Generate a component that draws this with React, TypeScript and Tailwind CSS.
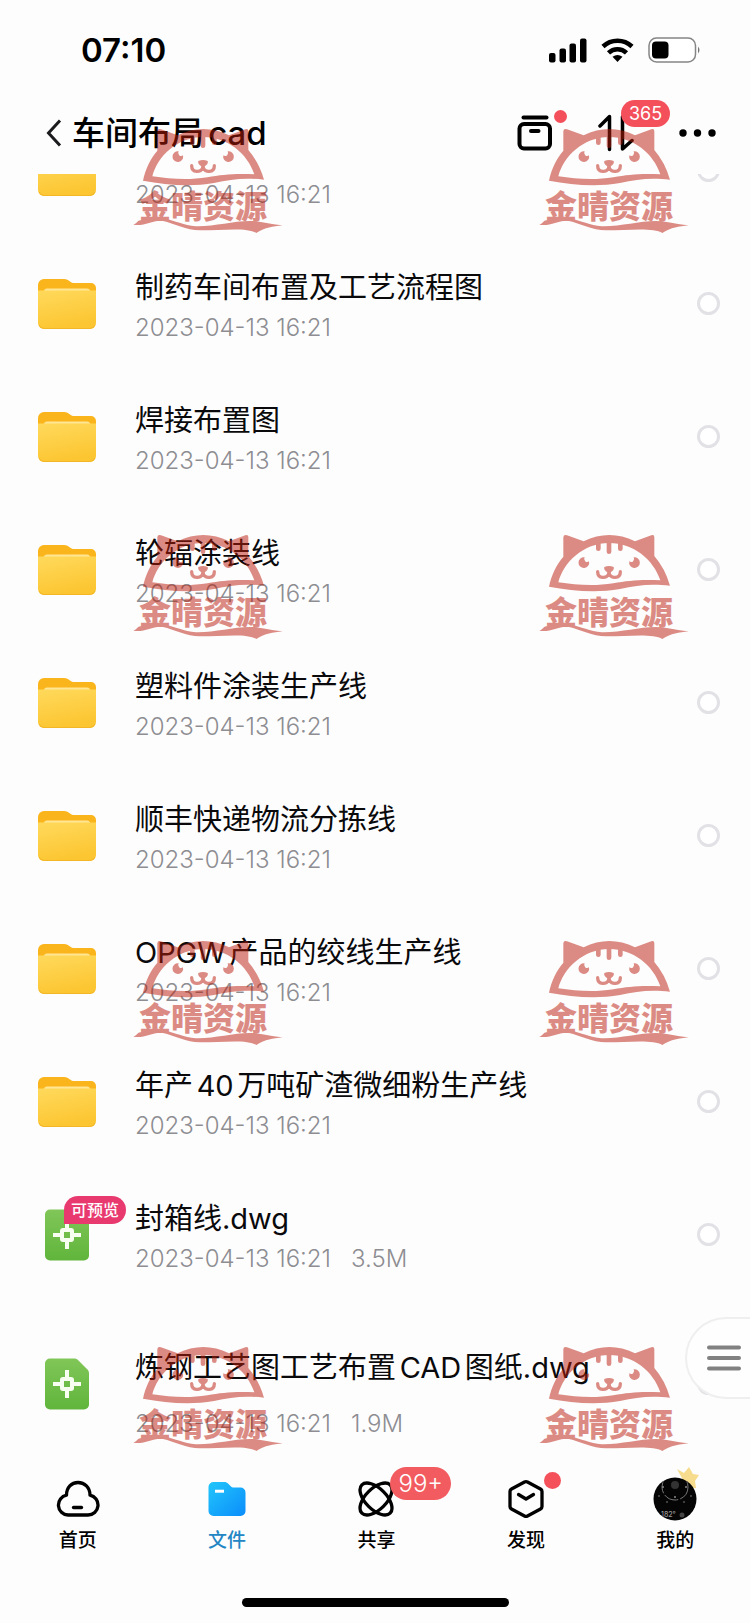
import type { ReactNode } from "react";

type Entry = {
  name: string;
  date: string;
  size?: string;
  kind: "folder" | "dwg";
  preview?: boolean;
};

const DATE = "2023-04-13 16:21";

const entries: Entry[] = [
  { name: "制药车间布置及工艺流程图", date: DATE, kind: "folder" },
  { name: "焊接布置图", date: DATE, kind: "folder" },
  { name: "轮辐涂装线", date: DATE, kind: "folder" },
  { name: "塑料件涂装生产线", date: DATE, kind: "folder" },
  { name: "顺丰快递物流分拣线", date: DATE, kind: "folder" },
  { name: "OPGW产品的绞线生产线", date: DATE, kind: "folder" },
  { name: "年产40万吨矿渣微细粉生产线", date: DATE, kind: "folder" },
  { name: "封箱线.dwg", date: DATE, size: "3.5M", kind: "dwg", preview: true },
];

function FolderIcon() {
  return (
    <svg width="58" height="52" viewBox="0 0 58 52" aria-hidden="true" className="shrink-0">
      <defs>
        <linearGradient id="folderFront" x1="0" y1="0" x2="0.3" y2="1">
          <stop offset="0" stopColor="#ffd95c" />
          <stop offset="1" stopColor="#fcc632" />
        </linearGradient>
      </defs>
      <path d="M0 7a6 6 0 0 1 6-6h20c3 0 4 1 6 2.500 1.500 1 2.500 1.500 4.500 1.500H53a5 5 0 0 1 5 5v8H0z" fill="#fbb51c" />
      <path d="M5.500 15c0-3 1-4.500 4-4.500h39c3 0 4 1.500 4 4.500z" fill="#ffe694" />
      <path d="M0 12.500h58V45a6 6 0 0 1-6 6H6a6 6 0 0 1-6-6z" fill="url(#folderFront)" />
      <path d="M1 47a6 6 0 0 0 5 3.500h46a6 6 0 0 0 5-3.500" fill="none" stroke="#f3b627" strokeWidth="1" />
    </svg>
  );
}

function DwgIcon({ flat }: { flat?: boolean }) {
  return (
    <svg width="44" height="52" viewBox="0 0 44 52" aria-hidden="true">
      <defs>
        <linearGradient id="dwgFill" x1="0" y1="0" x2="0" y2="1">
          <stop offset="0" stopColor="#80c658" />
          <stop offset="1" stopColor="#60b53c" />
        </linearGradient>
      </defs>
      <path
        d={
          flat
            ? "M5 0.500h34a5 5 0 0 1 5 5v41a5 5 0 0 1-5 5H5a5 5 0 0 1-5-5v-41a5 5 0 0 1 5-5z"
            : "M5 0.500h24c2 0 3 .5 4.500 2L42 11c1.500 1.500 2 2.500 2 4.500v31a5 5 0 0 1-5 5H5a5 5 0 0 1-5-5v-41a5 5 0 0 1 5-5z"
        }
        fill="url(#dwgFill)"
      />
      <g stroke="#f7fff0" fill="none">
        <path d="M22 12v8M22 32v8M8 26h8M28 26h8" strokeWidth="4" />
        <rect x="17" y="21" width="10" height="10" rx="1" strokeWidth="4" />
      </g>
    </svg>
  );
}

function SelectBox({ label }: { label: string }) {
  return (
    <input
      type="checkbox"
      aria-label={label}
      className="size-[23px] shrink-0 appearance-none rounded-full border-3 border-[#e2e2e6] bg-white"
    />
  );
}

function Row({ entry, tall }: { entry: Entry; tall?: boolean }) {
  return (
    <li className={`flex shrink-0 items-center pr-[30px] pl-[38px] ${tall ? "h-[165px]" : "h-[133px]"}`}>
      <div className="relative flex w-[58px] shrink-0 justify-center">
        {entry.kind === "folder" ? <FolderIcon /> : <DwgIcon flat={entry.preview} />}
        {entry.preview && (
          <span className="absolute -top-[13px] left-[26px] h-[28px] rounded-full rounded-bl-none bg-[#e93a70] px-[7px] text-[16px] leading-[28px] font-medium whitespace-nowrap text-white">
            可预览
          </span>
        )}
      </div>
      <div className={`ml-[39px] min-w-0 flex-1 ${tall ? "pt-6" : "pt-2"}`}>
        <div
          className={`truncate text-[29px] text-[#0a0a0c] [text-autospace:normal] ${tall ? "h-[56px] leading-[56px]" : "h-[40px] leading-[40px]"}`}
        >
          {entry.name}
        </div>
        <div className={`flex gap-5 text-[24px] font-light text-[#8d8d92] ${tall ? "leading-[56px]" : "leading-[40px]"}`}>
          <span>{entry.date}</span>
          {entry.size && <span>{entry.size}</span>}
        </div>
      </div>
      <SelectBox label={entry.name || "文件夹"} />
    </li>
  );
}

function Watermark() {
  return (
    <svg width="150" height="106" viewBox="117 102 450 318" fill="#b91c0a" className="opacity-50" aria-hidden="true">
      <path
        fillRule="evenodd"
        d="M147 260C154 225 170 193 190 170V112Q191 102 201 106L251 124Q328 86 405 124L454 106Q463 103 463 112V168Q495 205 510 257C450 250 410 256 360 267C285 280 215 272 147 260ZM175 247C190 187 250 129 328 129C400 129 460 178 481 241C420 238 385 242 340 250C280 260 225 254 175 247Z"
      />
      <path d="M288 128h14v18q0 7-7 7t-7-7zM320 126h14v29q0 7-7 7t-7-7zM354 128h14v18q0 7-7 7t-7-7z" />
      <path d="M254 172A16 16 0 1 0 267 184A9 9 0 0 1 254 172ZM401 172A16 16 0 1 1 388 184A9 9 0 0 0 401 172Z" />
      <path d="M313 201q14-6 28 0 3 8-9 16v8h-10v-8q-12-8-9-16z" />
      <path d="M293 215c0 22 29 22 34 5c5 17 34 17 34-5" fill="none" stroke="#b91c0a" strokeWidth="10" strokeLinecap="round" />
      <text x="135" y="371" fontSize="96" className="font-black">
        金晴资源
      </text>
      <path d="M118 392C132 388 128 378 145 378C168 382 182 370 208 373C245 380 270 395 305 397C370 399 440 373 500 384C525 388 545 392 566 394C535 398 515 400 487 417C460 399 380 409 320 409C280 410 240 388 207 381C178 376 150 399 118 392Z" />
    </svg>
  );
}

function Tab({ label, active, children }: { label: string; active?: boolean; children: ReactNode }) {
  return (
    <a href="#" className={`flex flex-col items-center text-[19px] font-medium ${active ? "text-[#2386c4]" : "text-black"}`}>
      <span className="relative flex h-[46px] items-center">{children}</span>
      <span className="mt-1 leading-[30px]">{label}</span>
    </a>
  );
}

export default function App() {
  return (
    <div className="relative min-h-screen overflow-hidden bg-[#fefdfe] font-['Inter','Noto_Sans_CJK_SC',sans-serif] text-black">
      <div className="flex h-[96px] items-center justify-between pt-1 pr-[49px] pl-[81px]">
        <time className="text-[33px] leading-[40px] font-semibold">07:10</time>
        <div className="flex items-center gap-[14px]">
          <svg width="38" height="25" viewBox="0 0 38 25" aria-hidden="true">
            <rect x="0" y="15" width="6.500" height="9.500" rx="2" />
            <rect x="10.500" y="10.500" width="6.500" height="14" rx="2" />
            <rect x="20.500" y="5.500" width="6.500" height="19" rx="2" />
            <rect x="31" y="0.500" width="6.500" height="24" rx="2" />
          </svg>
          <svg width="33" height="25" viewBox="0 0 33 25" fill="none" stroke="#000" strokeWidth="4.500" aria-hidden="true">
            <path d="M2 8.500a21 21 0 0 1 29 0M7.500 14.800a13 13 0 0 1 18 0" />
            <path d="M11.500 18.800q5-3.800 10 0l-5 5.200z" fill="#000" stroke="none" />
          </svg>
          <svg width="53" height="26" viewBox="0 0 53 26" aria-hidden="true">
            <rect x="1" y="1" width="46.500" height="24" rx="7.500" fill="#fff" stroke="#858585" strokeWidth="1.500" />
            <rect x="4" y="4.500" width="16.500" height="17" rx="4" />
            <path d="M50 9.500q3 3.500 0 7z" fill="#777" />
          </svg>
        </div>
      </div>

      <header className="flex h-[78px] items-center justify-between pr-[33px] pb-1 pl-[46px]">
        <div className="flex items-center gap-[10px]">
          <button type="button" aria-label="返回">
            <svg width="16" height="28" viewBox="0 0 16 28" fill="none" stroke="#1b1b1e" strokeWidth="3" className="block" aria-hidden="true">
              <path d="M14 1.500 2.500 14 14 26.500" />
            </svg>
          </button>
          <h1 className="text-[33px] leading-[44px] font-medium [text-autospace:normal]">车间布局cad</h1>
        </div>
        <div className="flex items-center">
          <button type="button" aria-label="收纳" className="relative">
            <svg width="36" height="36" viewBox="0 0 36 36" fill="none" stroke="#000" strokeWidth="4" strokeLinecap="round" className="block" aria-hidden="true">
              <path d="M6.500 2.500h23" />
              <rect x="2.500" y="9" width="30.500" height="24.500" rx="4.500" />
              <path d="M14 16h7.500" />
            </svg>
            <span className="absolute -top-[5px] left-[37px] size-[13px] rounded-full bg-[#f4505c]" />
          </button>
          <button type="button" aria-label="排序" className="relative ml-[45px]">
            <svg width="36" height="38" viewBox="0 0 36 38" fill="none" stroke="#000" strokeWidth="3.500" strokeLinecap="round" strokeLinejoin="round" className="block" aria-hidden="true">
              <path d="M11.500 35.500V2.500L2 12M24.500 2.500V35L34 26.500" />
            </svg>
            <span className="absolute -top-[14px] left-[23px] h-[27px] rounded-full bg-[#f4505c] px-2 text-[18px] leading-[27px] text-white">
              365
            </span>
          </button>
          <button type="button" aria-label="更多" className="ml-[45px]">
            <svg width="38" height="8" viewBox="0 0 38 8" className="block" aria-hidden="true">
              <circle cx="4" cy="4" r="3.700" />
              <circle cx="18.500" cy="4" r="3.700" />
              <circle cx="33" cy="4" r="3.700" />
            </svg>
          </button>
        </div>
      </header>

      <main>
        <ul>
          <li className="flex h-[63px] items-end overflow-hidden">
            <ul className="w-full">
              <Row entry={{ name: "", date: DATE, kind: "folder" }} />
            </ul>
          </li>
          {entries.map((entry) => (
            <Row key={entry.name} entry={entry} />
          ))}
          <Row tall entry={{ name: "炼钢工艺图工艺布置CAD图纸.dwg", date: DATE, size: "1.9M", kind: "dwg" }} />
        </ul>
      </main>

      <nav className="grid grid-cols-5 pt-[10px] pl-[3px]">
        <Tab label="首页">
          <svg width="44" height="38" viewBox="0 0 44 36" fill="none" stroke="#000" strokeWidth="3.300" strokeLinecap="round" strokeLinejoin="round" aria-hidden="true">
            <path d="M12 34h20a10 10 0 0 0 2-19.800C34 6.500 28.500 1.500 22 1.500S10.500 6.500 10.500 14.200A10 10 0 0 0 12 34z" />
            <path d="M17.500 26.500h8" />
          </svg>
        </Tab>
        <Tab label="文件" active>
          <svg width="38" height="36" viewBox="0 0 38 36" aria-hidden="true">
            <defs>
              <linearGradient id="tabFolder" x1="0" y1="0" x2="1" y2="1">
                <stop offset="0" stopColor="#22c6fb" />
                <stop offset="1" stopColor="#0b8dfb" />
              </linearGradient>
            </defs>
            <path d="M0.500 6a5 5 0 0 1 5-5H16c2 0 3 .5 4.500 2l2 2c1 1 2 1.500 3.500 1.500h6.500a5 5 0 0 1 5 5V30a5 5 0 0 1-5 5h-27a5 5 0 0 1-5-5z" fill="url(#tabFolder)" />
            <path d="M7 10.200h9" stroke="#fff" strokeWidth="3" />
          </svg>
        </Tab>
        <Tab label="共享">
          <svg width="38" height="38" viewBox="0 0 38 38" fill="none" stroke="#000" strokeWidth="3.300" aria-hidden="true">
            <ellipse cx="19" cy="19" rx="20" ry="10.500" transform="rotate(45 19 19)" />
            <ellipse cx="19" cy="19" rx="20" ry="10.500" transform="rotate(-45 19 19)" />
          </svg>
          <span className="absolute -top-[9px] left-[33px] h-[33px] rounded-full bg-[#f25c60] px-2 text-[24px] leading-[33px] font-light text-white">
            99+
          </span>
        </Tab>
        <Tab label="发现">
          <svg width="36" height="40" viewBox="0 0 36 40" fill="none" stroke="#000" strokeWidth="3.300" strokeLinecap="round" strokeLinejoin="round" aria-hidden="true">
            <path d="M16.500 3q1.500-.8 3 0L32.500 10q1.500.8 1.500 2.500v15q0 1.700-1.500 2.500l-13 7q-1.500.8-3 0l-13-7Q2 29.200 2 27.500v-15Q2 10.800 3.500 10z" />
            <path d="m10.500 15.500 7.500 4.500 7.500-4.500" />
          </svg>
          <span className="absolute -top-[4px] left-[36px] size-[17px] rounded-full bg-[#f5515b]" />
        </Tab>
        <Tab label="我的">
          <svg width="44" height="44" viewBox="0 0 44 44" className="overflow-visible" aria-hidden="true">
            <path d="m24-8 7 4 5-6 4 7 6 1-4 6 1 7-8 1z" fill="#f6dc8c" />
            <circle cx="22" cy="22" r="21.500" fill="#050505" />
            <clipPath id="avatarClip">
              <circle cx="22" cy="22" r="21" />
            </clipPath>
            <circle cx="22" cy="10" r="13" fill="none" stroke="#777" strokeWidth="1" strokeDasharray="15 2" clipPath="url(#avatarClip)" />
            <circle cx="22" cy="8" r="4" fill="#333" />
            <g fill="#888">
              <circle cx="10" cy="10" r="1" />
              <circle cx="33" cy="10" r="1" />
              <circle cx="22" cy="20" r="1" />
              <circle cx="14" cy="25" r=".8" />
              <circle cx="31" cy="25" r=".8" />
              <circle cx="6" cy="19" r=".8" />
              <circle cx="38" cy="19" r=".8" />
            </g>
            <text x="8" y="40" fontSize="7" fill="#999">182°</text>
            <circle cx="29" cy="38" r="2.500" fill="#444" />
          </svg>
        </Tab>
      </nav>
      <div className="mx-auto mt-[42px] mb-4 h-[9px] w-[267px] rounded-full bg-black" />

      <div className="pointer-events-none absolute top-[128px] left-[133px] grid grid-cols-[repeat(2,406px)] auto-rows-[406px]">
        {Array.from({ length: 8 }, (_, i) => (
          <Watermark key={i} />
        ))}
      </div>

      <button
        type="button"
        aria-label="菜单"
        className="absolute top-[1317px] right-0 flex h-[82px] w-[65px] items-center rounded-l-full border-2 border-r-0 border-[#efeff0] bg-[#fefefe] pl-5"
      >
        <svg width="34" height="26" viewBox="0 0 34 26" stroke="#818181" strokeWidth="4" strokeLinecap="round" aria-hidden="true">
          <path d="M2 2.500h30M2 13h30M2 23.500h30" />
        </svg>
      </button>
    </div>
  );
}
